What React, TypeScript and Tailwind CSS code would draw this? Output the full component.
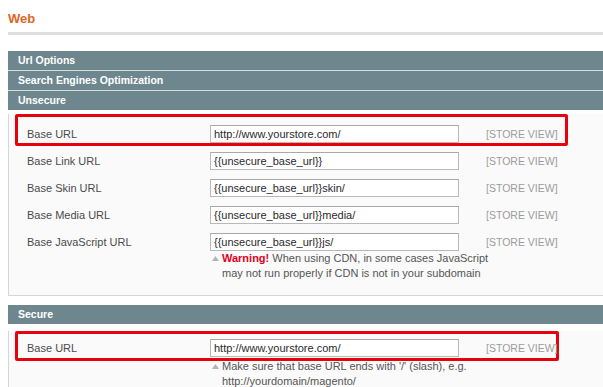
import React from "react";

const Tri = () => (
  <svg width="7" height="5" viewBox="0 0 7 5" className="mt-[5px] shrink-0">
    <polygon points="3.5,0 7,5 0,5" fill="#b4b4b4" />
  </svg>
);

const Header = ({ title, className = "" }: { title: string; className?: string }) => (
  <div
    className={`h-[19px] bg-[#6e878f] pl-[10px] text-[10.5px] font-bold leading-[19px] text-white ${className}`}
  >
    {title}
  </div>
);

const Input = ({ value }: { value: string }) => (
  <div className="h-[18px] w-[249px] shrink-0 border border-[#b9b9b9] border-t-[#a9a9a9] bg-white pl-[3px] text-[11px] leading-[16px] text-[#2a2a2a] whitespace-nowrap overflow-hidden">
    {value}
  </div>
);

const Label = ({ text }: { text: string }) => (
  <div className="w-[183px] shrink-0 text-[11px] leading-[18px] text-[#4a4a4a]">{text}</div>
);

const Scope = () => (
  <div className="ml-[27px] text-[10.5px] leading-[18px] text-[#9c9c9c] whitespace-nowrap">[STORE VIEW]</div>
);

const Row = ({ label, value }: { label: string; value: string }) => (
  <div className="flex h-[27px] items-start pl-[18px] pt-[6px]">
    <Label text={label} />
    <Input value={value} />
    <Scope />
  </div>
);

export default function App() {
  return (
    <div
      className="h-[387px] w-[603px] overflow-hidden bg-white"
      style={{ fontFamily: '"Liberation Sans", Arial, sans-serif' }}
    >
      <div className="w-[660px] pl-[8px]">
        <div className="pt-[11px] text-[13px] font-bold leading-[16px] text-[#e0651e]">Web</div>
        <div className="mt-[5px] h-[3px] bg-[#dedede]" />

        <div className="mt-[16px]">
          <Header title="Url Options" />
          <div className="h-[1px] bg-[#d3dcdf]" />
          <Header title="Search Engines Optimization" />
          <div className="h-[1px] bg-[#d3dcdf]" />
          <Header title="Unsecure" />
          <div className="border-x border-b border-[#d6d6d6] bg-[#fafafa] pb-[14px]">
            <div className="relative ml-[6px] mt-[4px] flex h-[32px] w-[553px] items-end rounded-[2px] border-[3px] border-[#e8000d] pl-[9px]">
              <Label text="Base URL" />
              <Input value="http://www.yourstore.com/" />
              <Scope />
            </div>
            <Row label="Base Link URL" value="{{unsecure_base_url}}" />
            <Row label="Base Skin URL" value="{{unsecure_base_url}}skin/" />
            <Row label="Base Media URL" value="{{unsecure_base_url}}media/" />
            <div className="flex items-start pl-[18px] pt-[6px]">
              <Label text="Base JavaScript URL" />
              <div className="w-[249px] shrink-0">
                <Input value="{{unsecure_base_url}}js/" />
                <div className="flex pl-[2px] text-[11px] leading-[15px] text-[#555]">
                  <Tri />
                  <div className="ml-[3px] whitespace-nowrap">
                    <span className="font-bold text-[#e3001c]">Warning!</span> When using CDN, in some cases JavaScript
                    <br />
                    may not run properly if CDN is not in your subdomain
                  </div>
                </div>
              </div>
              <Scope />
            </div>
          </div>

          <Header title="Secure" className="mt-[9px]" />
          <div className="border-x border-[#d6d6d6] bg-[#fafafa] pb-[20px]">
            <div className="relative ml-[6px] mt-[7px] flex h-[30px] w-[544px] items-end rounded-[2px] border-[3px] border-[#e8000d] pb-[1px] pl-[9px]">
              <Label text="Base URL" />
              <Input value="http://www.yourstore.com/" />
              <Scope />
            </div>
            <div className="-mt-[2px] flex pl-[203px] text-[11px] leading-[15px] text-[#555]">
              <Tri />
              <div className="ml-[3px] whitespace-nowrap">
                Make sure that base URL ends with '/' (slash), e.g.
                <br />
                http://yourdomain/magento/
              </div>
            </div>
          </div>
        </div>
      </div>
    </div>
  );
}
